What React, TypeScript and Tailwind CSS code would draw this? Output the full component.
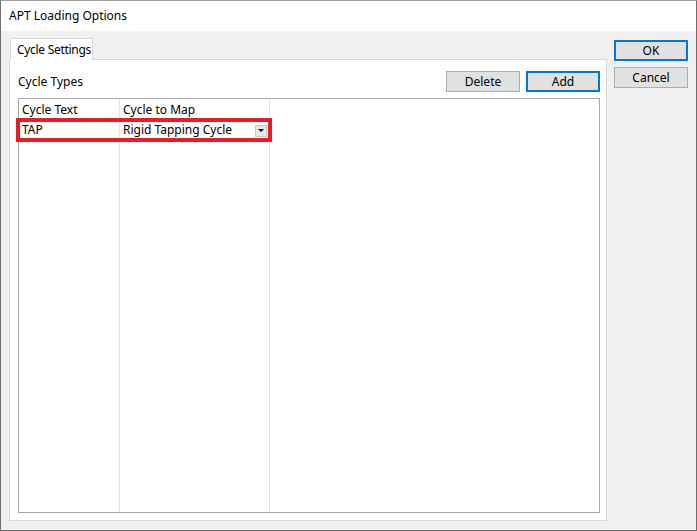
import { useState } from 'react';

const font = "font-['Segoe_UI','Noto_Sans',sans-serif]";

function WinButton({ label, isDefault = false }: { label: string; isDefault?: boolean }) {
  return (
    <button
      className={`flex h-full w-full items-center justify-center bg-[#e1e1e1] text-[12px] leading-none text-black ${
        isDefault ? 'border-2 border-[#0078d7]' : 'border border-[#adadad]'
      }`}
    >
      {label}
    </button>
  );
}

export default function App() {
  const [rows] = useState([{ text: 'TAP', cycle: 'Rigid Tapping Cycle' }]);

  return (
    <div className={`${font} flex h-[531px] w-[697px] flex-col border border-[#6e6e6e] border-t-[#a0a0a0] bg-[#f0f0f0] text-black`}>
      {/* Title bar */}
      <div className="flex h-[30px] items-center bg-white pl-2 text-[12px]">APT Loading Options</div>

      <div className="flex flex-1 pl-2 pt-[7px]">
        {/* Tab control */}
        <div className="flex w-[598px] flex-col pb-[9px]">
          <div className="flex">
            <div className="z-10 -mb-px ml-px flex h-[22px] w-[83px] items-center whitespace-nowrap border border-b-0 border-[#d9d9d9] bg-white pl-[6px] text-[12px] tracking-[-0.3px]">
              Cycle Settings
            </div>
          </div>
          <div className="flex flex-1 flex-col border border-[#d9d9d9] bg-white pb-[7px] pl-[8px] pr-[6px] pt-[11px]">
            <div className="flex h-[21px] items-center">
              <span className="pt-[1px] text-[12px]">Cycle Types</span>
              <div className="ml-auto flex h-full gap-[6px]">
                <div className="flex w-[74px]">
                  <WinButton label="Delete" />
                </div>
                <div className="flex w-[74px]">
                  <WinButton label="Add" isDefault />
                </div>
              </div>
            </div>

            {/* List view */}
            <div className="relative mt-[6px] flex flex-1 border border-[#a6a6b0] bg-white text-[12px]">
              <div className="flex w-[101px] flex-col border-r border-[#e5e5e5]">
                <div className="flex h-[20px] items-center pl-[3px] pt-[2px]">Cycle Text</div>
                {rows.map((r) => (
                  <div key={r.text} className="flex h-[20px] items-center pl-[3px] pt-[2px]">
                    {r.text}
                  </div>
                ))}
              </div>
              <div className="flex w-[150px] flex-col border-r border-[#e5e5e5]">
                <div className="flex h-[20px] items-center pl-[3px] pt-[2px]">Cycle to Map</div>
                {rows.map((r) => (
                  <div key={r.text} className="flex h-[20px] items-center whitespace-nowrap pl-[3px] pr-[2px]">
                    <span className="pt-[2px]">{r.cycle}</span>
                    <span className="ml-auto mt-[3px] flex h-[12px] w-[12px] items-center justify-center border border-[#c8c8c8] bg-[#e8e8e8]">
                      <svg width="6" height="4" viewBox="0 0 6 4">
                        <path d="M0 0h6L3 3z" fill="#000" />
                      </svg>
                    </span>
                  </div>
                ))}
              </div>

              {/* Highlight annotation */}
              <div className="pointer-events-none absolute left-[-3px] top-[19px] h-[24px] w-[256px] border-4 border-[#ed1c24]" />
            </div>
          </div>
        </div>

        {/* Dialog buttons */}
        <div className="ml-[7px] flex w-[74px] flex-col gap-[6px] pt-[2px]">
          <div className="flex h-[21px]">
            <WinButton label="OK" isDefault />
          </div>
          <div className="flex h-[21px]">
            <WinButton label="Cancel" />
          </div>
        </div>
      </div>
    </div>
  );
}
